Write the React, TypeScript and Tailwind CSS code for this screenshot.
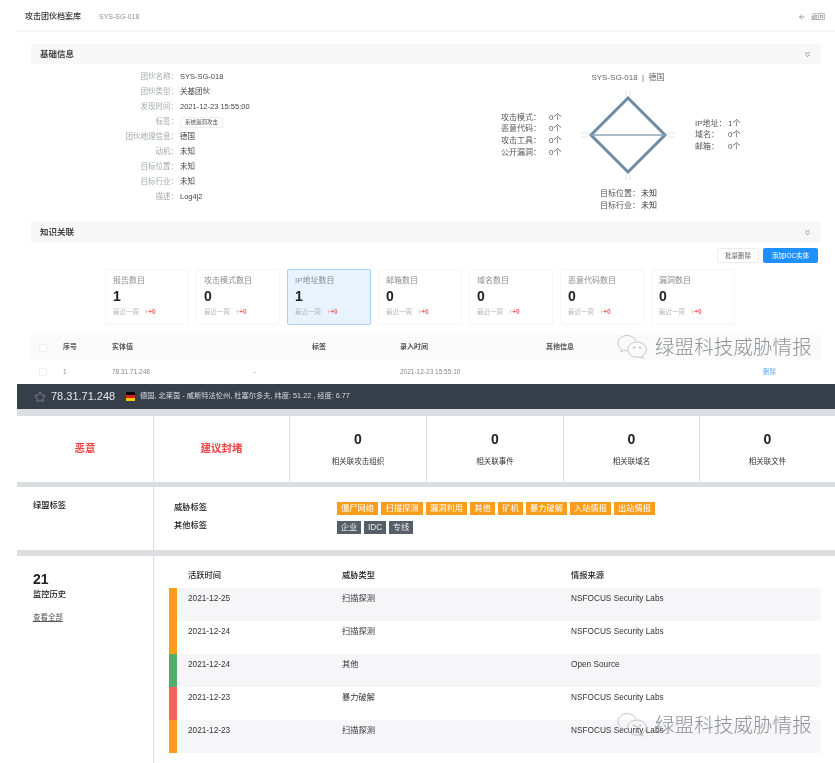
import { ArrowLeft, ChevronsDown, Star } from "lucide-react";

const infoRows: [string, string][] = [
  ["团伙名称：", "SYS-SG-018"],
  ["团伙类型：", "关基团伙"],
  ["发现时间：", "2021-12-23 15:55:00"],
  ["标签：", ""],
  ["团伙地理信息：", "德国"],
  ["动机：", "未知"],
  ["目标位置：", "未知"],
  ["目标行业：", "未知"],
  ["描述：", "Log4j2"],
];

const cards = [
  ["报告数目", "1"],
  ["攻击模式数目", "0"],
  ["IP地址数目", "1"],
  ["邮箱数目", "0"],
  ["域名数目", "0"],
  ["恶意代码数目", "0"],
  ["漏洞数目", "0"],
];

const orangeTags: [string, string][] = [
  ["僵尸网络", "w-[41px]"],
  ["扫描探测", "w-[42px]"],
  ["漏洞利用", "w-[41px]"],
  ["其他", "w-[25px]"],
  ["矿机", "w-[25px]"],
  ["暴力破解", "w-[41px]"],
  ["入站情报", "w-[41px]"],
  ["出站情报", "w-[41px]"],
];

const history: [string, string, string, string, string][] = [
  ["2021-12-25", "扫描探测", "NSFOCUS Security Labs", "bg-[#fb9d1c]", "bg-[#f6f6f8]"],
  ["2021-12-24", "扫描探测", "NSFOCUS Security Labs", "bg-[#fb9d1c]", "bg-white"],
  ["2021-12-24", "其他", "Open Source", "bg-[#52ad6d]", "bg-[#f6f6f8]"],
  ["2021-12-23", "暴力破解", "NSFOCUS Security Labs", "bg-[#f8615a]", "bg-white"],
  ["2021-12-23", "扫描探测", "NSFOCUS Security Labs", "bg-[#fb9d1c]", "bg-[#f6f6f8]"],
];

function SectionHeader({ title }: { title: string }) {
  return (
    <div className="mx-[14px] h-[20px] bg-[#f7f7f8] flex items-center justify-between pl-[9px] pr-[9px]">
      <span className="text-[8.5px] font-bold text-[#444]">{title}</span>
      <ChevronsDown size={9} strokeWidth={2.5} className="text-[#8a8f96]" />
    </div>
  );
}

function Stat({ label, value }: { label: string; value: string }) {
  return (
    <div className="h-[66px] bg-white flex flex-col items-center justify-center pb-[2px]">
      <div className="text-[14px] font-bold text-[#222] leading-[18px]">{value}</div>
      <div className="text-[7.5px] text-[#333] mt-[9px] leading-[10px]">{label}</div>
    </div>
  );
}

function Watermark() {
  return (
    <div className="absolute left-[617px] flex items-center gap-[7px] pointer-events-none">
      <svg width="31" height="26" viewBox="0 0 31 26" fill="none" stroke="#b5b7ba" strokeWidth="0.8">
        <path d="M19 7C17.500 3.500 14 1.500 10 1.500 5 1.500 1 5 1 9.200c0 2.500 1.300 4.600 3.500 6l-.7 2.600 3-1.500c1 .3 2 .4 3 .4" />
        <path d="M20 8c-5.200 0-9.200 3.400-9.200 7.600s4 7.600 9.200 7.600c1.100 0 2.100-.2 3.100-.5l3 1.600-.8-2.600c2.300-1.400 4-3.600 4-6.100C29.300 11.400 25.200 8 20 8z" />
        <circle cx="17" cy="13.500" r="0.700" fill="#b5b7ba" />
        <circle cx="23" cy="13.500" r="0.700" fill="#b5b7ba" />
      </svg>
      <span className="text-[19.500px] leading-[26px] tracking-[0.100px] text-[#8f9194] font-light whitespace-nowrap">
        绿盟科技威胁情报
      </span>
    </div>
  );
}

export default function App() {
  return (
    <div className="relative w-[835px] h-[763px] overflow-hidden bg-white font-['Liberation_Sans','Noto_Sans_CJK_SC',sans-serif] blur-[0.4px]">
      <div className="ml-[17px] h-[384px] flex flex-col">
        <header className="h-[32px] shrink-0 border-b-2 border-[#f4f5f6] flex items-center pt-[4px] pl-[8px] pr-[10px]">
          <span className="text-[8px] text-[#333] font-medium w-[74px]">攻击团伙档案库</span>
          <span className="text-[7px] text-[#8d9197]">SYS-SG-018</span>
          <span className="ml-auto flex items-center gap-[5px] text-[7px] text-[#777]">
            <ArrowLeft size={8} />
            返回
          </span>
        </header>

        <div className="mt-[12px]">
          <SectionHeader title="基础信息" />
        </div>

        <div className="h-[158px] flex">
          <div className="w-[411px] pt-[5px]">
            {infoRows.map(([k, v]) => (
              <div key={k} className="h-[15px] flex items-center">
                <span className="w-[161px] text-right text-[7.500px] text-[#a6a9ad]">{k}</span>
                <span className="ml-[2px] text-[7.500px] text-[#444]">
                  {v || (
                    <span className="inline-block border border-[#eee] rounded-[2px] px-[4px] text-[5.500px] leading-[9px] text-[#555]">
                      系统漏洞攻击
                    </span>
                  )}
                </span>
              </div>
            ))}
          </div>
          <div className="w-[400px] flex flex-col pt-[2px]">
            <div className="h-[23px] flex items-center justify-center text-[8px] text-[#666]">
              SYS-SG-018&nbsp;&nbsp;|&nbsp;&nbsp;德国
            </div>
            <div className="grid grid-cols-[148px_104px_148px] h-[92px] items-center">
              <div className="pl-[73px] text-[8px] text-[#555] leading-[11.700px]">
                {["攻击模式：", "恶意代码：", "攻击工具：", "公开漏洞："].map((l) => (
                  <div key={l} className="flex">
                    <span className="w-[48px]">{l}</span>
                    <span>0个</span>
                  </div>
                ))}
              </div>
              <svg width="104" height="92" viewBox="0 0 104 92" fill="none">
                <path d="M50 1v7M54 1v7M50 84v7M54 84v7M12 44h-7M12 48h-7M92 44h7M92 48h7" stroke="#e3e6ea" strokeWidth="1" />
                <path d="M52 9 89 46 52 83 15 46Z" stroke="#6f8ba3" strokeWidth="3" />
                <path d="M15 46H89" stroke="#8ea5b8" strokeWidth="1.500" />
              </svg>
              <div className="pl-[15px] text-[8px] text-[#555] leading-[11.500px]">
                {[
                  ["IP地址：", "1个"],
                  ["域名：", "0个"],
                  ["邮箱：", "0个"],
                ].map(([l, n]) => (
                  <div key={l} className="flex">
                    <span className="w-[33px]">{l}</span>
                    <span>{n}</span>
                  </div>
                ))}
              </div>
            </div>
            <div className="mt-[7px] pl-[172px] text-[8px] text-[#555] leading-[11.500px]">
              {["目标位置：", "目标行业："].map((l) => (
                <div key={l} className="flex">
                  <span className="w-[41px]">{l}</span>
                  <span className="text-[#333]">未知</span>
                </div>
              ))}
            </div>
          </div>
        </div>

        <SectionHeader title="知识关联" />

        <div className="mt-[6px] h-[15px] flex justify-end gap-[4px] pr-[17px]">
          <button className="w-[42px] border border-[#eeeeef] rounded-[2px] text-[6.500px] text-[#666]">批量删除</button>
          <button className="w-[55px] bg-[#1e90ff] rounded-[2px] text-[6.500px] text-white">添加IOC实体</button>
        </div>

        <div className="mt-[6px] ml-[88px] flex gap-[7px]">
          {cards.map(([t, n], i) => (
            <div
              key={t}
              className={
                i === 2
                  ? "w-[84px] h-[56px] border border-[#a8d0f5] bg-[#e8f3fe] rounded-[2px] pl-[7px] pt-[5px]"
                  : "w-[84px] h-[56px] border border-[#f6f6f7] bg-white rounded-[2px] pl-[7px] pt-[5px]"
              }
            >
              <div className="text-[8px] leading-[12px] text-[#8b8e92]">{t}</div>
              <div className="text-[14px] leading-[18px] font-bold text-[#222]">{n}</div>
              <div className="text-[6.500px] leading-[11px] mt-[1px] text-[#b5b7ba] flex gap-[6px]">
                最近一周<span className="text-[#ee6666] font-bold">↑+0</span>
              </div>
            </div>
          ))}
        </div>

        <div className="mt-[10px] mx-[14px] h-[25px] bg-[#fafafb] grid grid-cols-[32px_49px_200px_88px_146px_217px_auto] items-center text-[7px] font-bold text-[#555]">
          <span className="ml-[8px] w-[8px] h-[8px] border border-[#f0f0f0] rounded-[1px] bg-white" />
          <span>序号</span>
          <span>实体值</span>
          <span>标签</span>
          <span>录入时间</span>
          <span>其他信息</span>
          <span />
        </div>
        <div className="mx-[14px] h-[24px] grid grid-cols-[32px_49px_142px_146px_146px_217px_auto] items-center text-[6.500px] text-[#888]">
          <span className="ml-[8px] w-[8px] h-[8px] border border-[#eeeeee] rounded-[1px]" />
          <span>1</span>
          <span>78.31.71.248</span>
          <span>-</span>
          <span>2021-12-23 15:55:10</span>
          <span />
          <span className="text-[#64a8f0]">删除</span>
        </div>
      </div>

      <div className="ml-[17px] flex flex-col bg-[#dcdde0]">
        <div className="h-[25px] bg-[#37404a] flex items-center pl-[17px] text-[#e5e7ea]">
          <Star size={12} strokeWidth={1} className="text-[#b8bcc2]" />
          <span className="ml-[5px] text-[11px] w-[75px]">78.31.71.248</span>
          <span className="w-[9px] h-[9px] flex flex-col shrink-0">
            <span className="h-[3px] bg-black" />
            <span className="h-[3px] bg-[#d61f1f]" />
            <span className="h-[3px] bg-[#f7c600]" />
          </span>
          <span className="ml-[5px] text-[7.250px] text-[#d7dade]">
            德国, 北莱茵 - 威斯特法伦州, 杜塞尔多夫, 纬度: 51.22 , 经度: 6.77
          </span>
        </div>

        <div className="mt-[7px] h-[66px] grid grid-cols-[136px_135px_136px_136px_135px_auto] gap-x-[1px]">
          <div className="bg-white flex items-center justify-center text-[10.500px] font-bold text-[#ef4444]">恶意</div>
          <div className="bg-white flex items-center justify-center text-[10.500px] font-bold text-[#ef4444]">建议封堵</div>
          <Stat value="0" label="相关联攻击组织" />
          <Stat value="0" label="相关联事件" />
          <Stat value="0" label="相关联域名" />
          <Stat value="0" label="相关联文件" />
        </div>

        <div className="mt-[5px] h-[63px] grid grid-cols-[136px_1fr] gap-x-[1px]">
          <div className="bg-white pl-[16px] pt-[13px] text-[8.250px] font-medium text-[#222]">绿盟标签</div>
          <div className="bg-white flex pl-[20px]">
            <div className="w-[163px] text-[8.250px] font-medium text-[#222] leading-[18px] pt-[12px]">
              <div>威胁标签</div>
              <div>其他标签</div>
            </div>
            <div className="flex flex-col gap-[6px] pt-[15px]">
              <div className="flex gap-[3px]">
                {orangeTags.map(([t, w]) => (
                  <span key={t} className={`${w} h-[13px] bg-[#fb9d1c] text-[#fff] text-[8.250px] leading-[13px] text-center whitespace-nowrap`}>
                    {t}
                  </span>
                ))}
              </div>
              <div className="flex gap-[3px]">
                <span className="w-[24px] h-[13px] bg-[#565e67] text-[#e8e9ea] text-[8.250px] leading-[13px] text-center">企业</span>
                <span className="w-[22px] h-[13px] bg-[#565e67] text-[#e8e9ea] text-[8.250px] leading-[13px] text-center">IDC</span>
                <span className="w-[24px] h-[13px] bg-[#565e67] text-[#e8e9ea] text-[8.250px] leading-[13px] text-center">专线</span>
              </div>
            </div>
          </div>
        </div>

        <div className="mt-[6px] h-[207px] grid grid-cols-[136px_1fr] gap-x-[1px]">
          <div className="bg-white pl-[16px] pt-[15px]">
            <div className="text-[14px] font-bold text-[#222] leading-[16px]">21</div>
            <div className="mt-[2px] text-[8.250px] font-medium text-[#222] leading-[12px]">监控历史</div>
            <div className="mt-[11px] text-[7.500px] text-[#555] leading-[12px] underline">查看全部</div>
          </div>
          <div className="bg-white pl-[15px] pr-[14px]">
            <div className="h-[32px] pt-[8px] leading-[24px] flex pl-[19px] text-[8.250px] font-medium text-[#222]">
              <span className="w-[154px]">活跃时间</span>
              <span className="w-[229px]">威胁类型</span>
              <span>情报来源</span>
            </div>
            {history.map(([d, t, s, bar, bg], i) => (
              <div key={i} className={`h-[33px] flex ${bg}`}>
                <span className={`w-[8px] shrink-0 ${bar}`} />
                <div className="flex pl-[11px] pt-[5px] text-[8.250px] leading-[12px] text-[#333]">
                  <span className="w-[154px]">{d}</span>
                  <span className="w-[229px]">{t}</span>
                  <span>{s}</span>
                </div>
              </div>
            ))}
          </div>
        </div>
      </div>

      <div className="absolute inset-x-0 top-[334px]">
        <Watermark />
      </div>
      <div className="absolute inset-x-0 top-[712px]">
        <Watermark />
      </div>
    </div>
  );
}
